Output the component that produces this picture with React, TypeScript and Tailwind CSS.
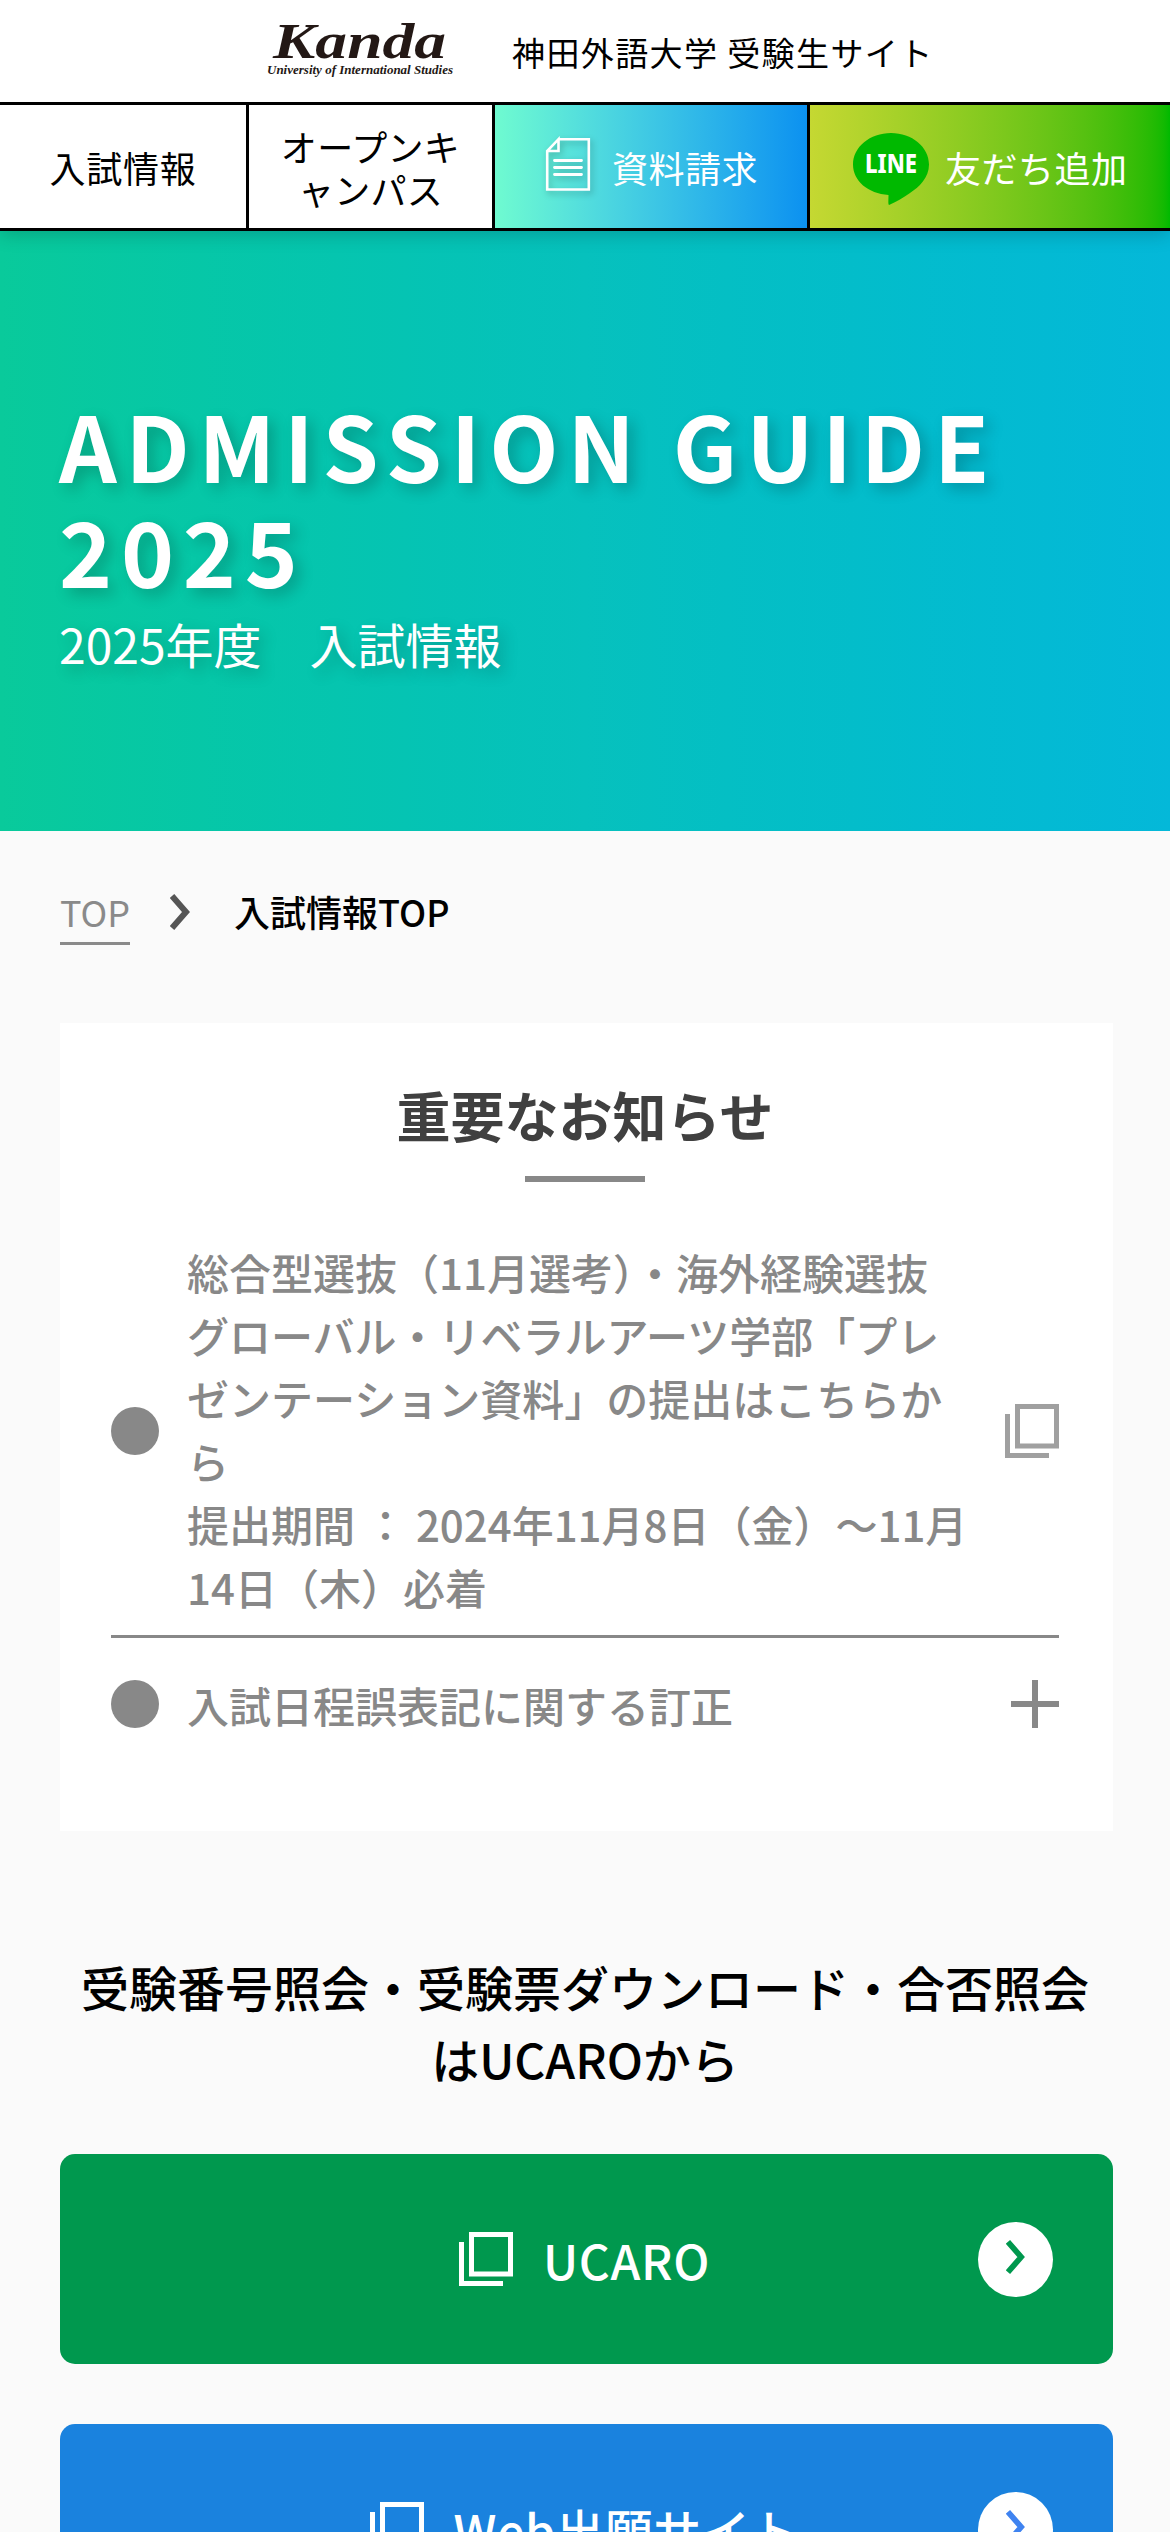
function Logo() {
  return (
    <svg width="189" height="58" viewBox="0 0 189 58" className="block overflow-visible" fill="#231815">
      <text x="7" y="36" fontFamily="Liberation Serif, serif" fontStyle="italic" fontWeight="700" fontSize="51" textLength="173" lengthAdjust="spacingAndGlyphs">
        Kanda
      </text>
      <text x="1" y="52" fontFamily="Liberation Serif, serif" fontStyle="italic" fontWeight="700" fontSize="12" textLength="186" lengthAdjust="spacingAndGlyphs">
        University of International Studies
      </text>
    </svg>
  );
}

function DocumentIcon() {
  return (
    <svg width="44" height="53" viewBox="0 0 44 53" fill="none" stroke="#fff" className="block overflow-visible drop-shadow-[2px_3px_3px_rgba(0,0,0,0.25)]">
      <path d="M12.500 1.200H42.800V51.500H1.200V13L12.500 1.200V13H1.200" strokeWidth="2.600" />
      <path d="M8.500 22.500H35.500M8.500 29.500H35.500M8.500 36.500H35.500" strokeWidth="2.800" strokeLinecap="round" />
    </svg>
  );
}

function LineIcon() {
  return (
    <svg width="76" height="72" viewBox="0 0 76 72" className="mt-[4px] block">
      <path d="M38 0C59 0 76 14 76 31.500C76 45 66 54 57 60C50 65 43 69 36 72C35 71 35.500 67 35.500 62C15 60.500 0 48 0 31.500C0 14 17 0 38 0Z" fill="#00b900" />
      <text x="12" y="40" fill="#fff" fontFamily="Noto Sans, sans-serif" fontWeight="800" fontSize="26" textLength="52" lengthAdjust="spacingAndGlyphs">
        LINE
      </text>
    </svg>
  );
}

function WindowIcon() {
  return (
    <svg width="54" height="54" viewBox="0 0 54 54" fill="none" stroke="currentColor" className="block shrink-0">
      <path d="M12.500 2.500H51.500V42H12.500Z" strokeWidth="5" />
      <path d="M2.500 10V51.500H44" strokeWidth="5" />
    </svg>
  );
}

function Chevron({ className }: { className: string }) {
  return (
    <svg width="20" height="36" viewBox="0 0 20 36" fill="none" stroke="currentColor" strokeWidth="6" className={className}>
      <path d="M2 2L16 18L2 34" />
    </svg>
  );
}

function LinkButton({ label, color }: { label: string; color: string }) {
  return (
    <a className={`relative flex h-[210px] shrink-0 items-center justify-center gap-[30px] rounded-[15px] pr-[4px] text-white ${color}`}>
      <WindowIcon />
      <span className="text-[48px] leading-[72px] font-medium tracking-[0.7px]">{label}</span>
      <span className="absolute right-[60px] flex size-[75px] items-center justify-center rounded-full bg-white">
        <Chevron className="-mt-1 h-[34px] w-[19px] text-[var(--c)]" />
      </span>
    </a>
  );
}

export default function App() {
  return (
    <div className="flex h-[2532px] w-[1170px] flex-col overflow-hidden bg-[#fafafa] font-['Noto_Sans_CJK_JP',sans-serif] text-black">
      <header className="relative z-10 shrink-0 bg-white shadow-[0_3px_18px_rgba(0,0,0,0.2)]">
        <div className="flex h-[105px] items-center border-b-[3px] border-black pl-[266px]">
          <Logo />
          <span className="mt-[2px] ml-[57px] text-[33px] leading-[50px] tracking-[1.4px] whitespace-nowrap">神田外語大学 受験生サイト</span>
        </div>
        <nav className="flex h-[126px] border-b-[3px] border-black text-[36px] leading-[43px]">
          <a className="flex w-[249px] items-center justify-center border-r-[3px] border-black pt-[2px] tracking-[0.7px]">入試情報</a>
          <a className="flex w-[246px] items-center justify-center border-r-[3px] border-black pt-[2px] text-center tracking-[0.3px]">
            オープンキ
            <br />
            ャンパス
          </a>
          <a className="flex w-[315px] items-center border-r-[3px] border-black bg-linear-to-r from-[#6ffbd0] to-[#0c91f0] pl-[51px] text-white">
            <div className="-mt-1">
              <DocumentIcon />
            </div>
            <span className="mt-[2px] ml-[22px] tracking-[0.5px]">資料請求</span>
          </a>
          <a className="flex flex-1 items-center bg-linear-to-r from-[#c5d832] to-[#00b900] pl-[43px] text-white">
            <LineIcon />
            <span className="mt-[2px] ml-[16px] tracking-[0.5px] whitespace-nowrap">友だち追加</span>
          </a>
        </nav>
      </header>

      <section className="h-[600px] shrink-0 bg-linear-to-r from-[#09ca9b] via-[#06c1bd] to-[#04b8d9] pt-[161px] pl-[59px] text-white">
        <h1 className="text-[90px] leading-[105px] font-bold tracking-[8.8px] [text-shadow:6px_6px_15px_rgba(0,0,0,0.22)]">
          ADMISSION GUIDE
          <br />
          2025
        </h1>
        <p className="text-[48px] leading-[83px] [text-shadow:6px_6px_15px_rgba(0,0,0,0.22)]">2025年度　入試情報</p>
      </section>

      <div className="flex h-[192px] shrink-0 items-start pt-[49px] pl-[60px] text-[36px] leading-[62px]">
        <a className="border-b-[3px] border-[#8a8a8a] text-[#8a8a8a]">TOP</a>
        <Chevron className="mt-[14px] ml-[40px] text-[#555]" />
        <span className="ml-[44px] font-medium">入試情報TOP</span>
      </div>

      <main className="ml-[60px] flex w-[1053px] flex-col">
        <section className="h-[808px] shrink-0 bg-white px-[51px] pt-[52px] text-[#888]">
          <h2 className="-ml-[3px] text-center text-[54px] leading-[80px] font-bold text-[#404040]">重要なお知らせ</h2>
          <div className="mt-[21px] ml-[414px] h-[6px] w-[120px] bg-[#888]" />
          <ul className="mt-[58px] text-[42px] leading-[63px] font-medium">
            <li className="flex w-[948px] items-center border-b-[3px] border-[#888] pb-[17px]">
              <span className="mt-[4px] size-[48px] shrink-0 rounded-full bg-[#888]" />
              <p className="ml-[28px] flex-1 whitespace-nowrap">
                総合型選抜（11月選考）・海外経験選抜
                <br />
                グローバル・リベラルアーツ学部「プレ
                <br />
                ゼンテーション資料」の提出はこちらか
                <br />
                ら
                <br />
                提出期間 ： 2024年11月8日（金）〜11月
                <br />
                14日（木）必着
              </p>
              <div className="mt-[4px] text-[#a0a0a0]">
                <WindowIcon />
              </div>
            </li>
            <li className="flex h-[132px] w-[948px] items-center">
              <span className="size-[48px] shrink-0 rounded-full bg-[#888]" />
              <span className="ml-[28px] flex-1">入試日程誤表記に関する訂正</span>
              <svg width="48" height="48" viewBox="0 0 48 48" stroke="#888" strokeWidth="6">
                <path d="M24 0V48M0 24H48" />
              </svg>
            </li>
          </ul>
        </section>

        <h2 className="mt-[119px] -ml-[3px] text-center text-[48px] leading-[72px] font-medium whitespace-nowrap">
          受験番号照会・受験票ダウンロード・合否照会
          <br />
          はUCAROから
        </h2>
        <div className="mt-[60px] flex flex-col gap-[60px]">
          <LinkButton label="UCARO" color="bg-[#00984e] [--c:#00984e]" />
          <LinkButton label="Web出願サイト" color="bg-[#1a82de] [--c:#3f83f0]" />
        </div>
      </main>
    </div>
  );
}
